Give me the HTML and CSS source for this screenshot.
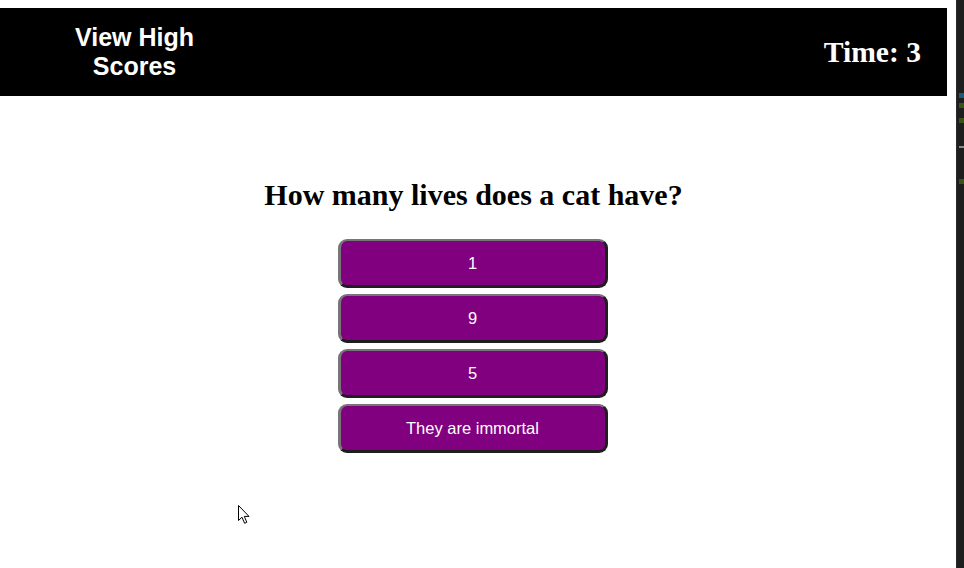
FILE: index.html
```html
<!DOCTYPE html>
<html lang="en">
<head>
<meta charset="utf-8">
<title>Quiz</title>
<link rel="stylesheet" href="styles.css">
</head>
<body>
<div class="screen">
  <div class="app">
    <header class="topbar">
      <a class="scores-link">View High<br>Scores</a>
      <div class="timer">Time: 3</div>
    </header>
    <main class="quiz">
      <h2 class="question">How many lives does a cat have?</h2>
      <div class="choices">
        <button class="choice">1</button>
        <button class="choice">9</button>
        <button class="choice">5</button>
        <button class="choice">They are immortal</button>
      </div>
    </main>
    <svg class="cursor" width="13" height="20" viewBox="0 0 13 20">
      <path d="M0.5 0.5 L0.5 15.5 L4 12.2 L6.6 18.3 L8.8 17.3 L6.3 11.4 L11 11.4 Z" fill="#fff" stroke="#000" stroke-width="1" stroke-linejoin="miter"/>
    </svg>
  </div>
  <div class="gutter"></div>
  <aside class="minimap">
    <span class="mark mark-blue m1"></span>
    <span class="mark mark-green m2"></span>
    <span class="mark mark-green m3"></span>
    <span class="mark mark-line m4"></span>
    <span class="mark mark-green m5"></span>
  </aside>
</div>
</body>
</html>
```

FILE: styles.css
```css
html, body {
  margin: 0;
  padding: 0;
  background: #fff;
}

.screen {
  display: flex;
  width: 964px;
  height: 568px;
  overflow: hidden;
}

.app {
  position: relative;
  width: 947px;
  padding-top: 8px;
  flex: none;
}

.topbar {
  height: 88px;
  background: #000;
  display: flex;
  align-items: center;
  justify-content: space-between;
}

.scores-link {
  width: 269px;
  text-align: center;
  color: #fff;
  font-family: "Liberation Sans", Arial, sans-serif;
  font-weight: bold;
  font-size: 25px;
  line-height: 29px;
}

.timer {
  color: #fff;
  font-family: "Liberation Serif", "Times New Roman", serif;
  font-weight: bold;
  font-size: 29.6px;
  padding-right: 26px;
}

.quiz {
  display: flex;
  flex-direction: column;
  align-items: center;
  padding-top: 82px;
}

.question {
  margin: 0 0 27px;
  font-family: "Liberation Serif", "Times New Roman", serif;
  font-weight: bold;
  font-size: 30px;
  line-height: 34px;
  color: #000;
}

.choices {
  display: flex;
  flex-direction: column;
  gap: 6px;
  margin-right: 2px;
}

.choice {
  width: 270px;
  height: 49px;
  box-sizing: border-box;
  background: #800080;
  color: #fff;
  font-family: "Liberation Sans", Arial, sans-serif;
  font-size: 16.5px;
  border-width: 2px 3px 3px 3px;
  border-style: solid;
  border-color: #767676 #1e1e1e #1e1e1e #767676;
  border-radius: 9px;
  padding: 0;
}

.cursor {
  position: absolute;
  left: 238px;
  top: 505px;
}

.gutter {
  width: 9px;
  flex: none;
}

.minimap {
  position: relative;
  width: 8px;
  flex: none;
  background: #1e1e1e;
  border-left: 1px solid #2a2a2a;
  box-sizing: border-box;
}

.mark {
  position: absolute;
  left: 2px;
  width: 5px;
  height: 5px;
}

.mark-blue { background: #1d5a78; }
.mark-green { background: #3b5316; }
.mark-line { background: #8a8a8a; height: 2px; }

.m1 { top: 93px; }
.m2 { top: 103px; }
.m3 { top: 118px; }
.m4 { top: 146px; }
.m5 { top: 179px; }
```
